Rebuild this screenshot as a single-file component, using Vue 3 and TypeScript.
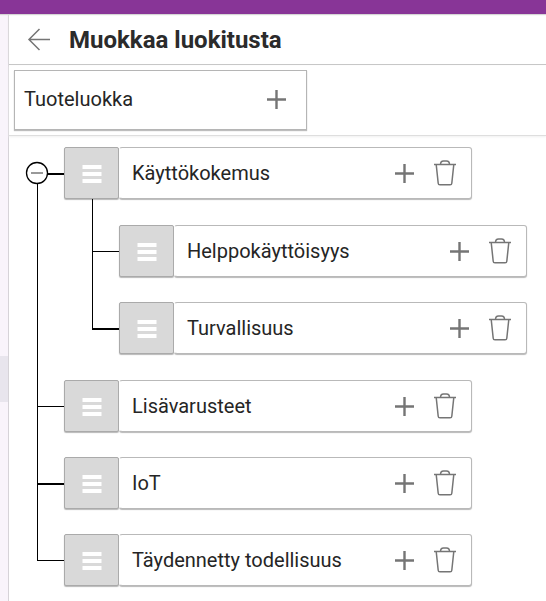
<script setup lang="ts">
import { ref } from 'vue'

interface Category {
  name: string
  children: Category[]
}

const rootName = ref('Tuoteluokka')
const expanded = ref(true)
const categories = ref<Category[]>([
  {
    name: 'Käyttökokemus',
    children: [
      { name: 'Helppokäyttöisyys', children: [] },
      { name: 'Turvallisuus', children: [] },
    ],
  },
  { name: 'Lisävarusteet', children: [] },
  { name: 'IoT', children: [] },
  { name: 'Täydennetty todellisuus', children: [] },
])

function add(list: Category[]) {
  list.push({ name: '', children: [] })
}

function remove(list: Category[], index: number) {
  list.splice(index, 1)
}
</script>

<template>
  <div class="app">
    <div class="topbar"></div>
    <div class="body">
      <aside class="rail"><div class="rail-item"></div></aside>
      <main class="panel">
        <header class="header">
          <button class="icon-button back" type="button" aria-label="Takaisin">
            <svg width="24" height="24" viewBox="0 0 24 24">
              <path d="M23 12.500H2M12.500 2L2 12.500l10.500 10.500" />
            </svg>
          </button>
          <h1>Muokkaa luokitusta</h1>
        </header>

        <section class="root-bar">
          <div class="root-card">
            <span class="name">{{ rootName }}</span>
            <button class="icon-button" type="button" aria-label="Lisää" @click="add(categories)">
              <svg class="plus" width="20" height="20" viewBox="0 0 20 20"><path d="M10.500 1v19M1 10.500h19" /></svg>
            </button>
          </div>
        </section>

        <ul class="tree">
          <li v-for="(item, i) in categories" :key="i" class="node">
            <button
              v-if="i === 0"
              class="toggle"
              type="button"
              aria-label="Tiivistä"
              :aria-expanded="expanded"
              @click="expanded = !expanded"
            >
              <svg width="24" height="24" viewBox="0 0 24 24">
                <circle cx="12" cy="12" r="10.500" />
                <path d="M6 12h12" />
              </svg>
            </button>
            <div class="row">
              <button class="handle" type="button" aria-label="Siirrä">
                <svg width="20" height="18" viewBox="0 0 20 18"><path d="M0.500 0h19v4h-19zM0.500 7h19v4h-19zM0.500 14h19v4h-19z" /></svg>
              </button>
              <div class="card">
                <span class="name">{{ item.name }}</span>
                <button class="icon-button" type="button" aria-label="Lisää" @click="add(item.children)">
                  <svg class="plus" width="20" height="20" viewBox="0 0 20 20"><path d="M10.500 1v19M1 10.500h19" /></svg>
                </button>
                <button class="icon-button" type="button" aria-label="Poista" @click="remove(categories, i)">
                  <svg class="trash" width="22" height="26" viewBox="0 0 22 26">
                    <path d="M0 4.500h22M2.200 4.500l2 18.700q.1 1.600 1.700 1.600h10.200q1.600 0 1.700-1.600l2-18.700M6.500 4.500C6.500 2 8 1 9.500 1h3C14 1 15.500 2 15.500 4.500" />
                  </svg>
                </button>
              </div>
            </div>

            <ul v-if="expanded && item.children.length" class="children">
              <li v-for="(child, j) in item.children" :key="j" class="node">
                <div class="row">
                  <button class="handle" type="button" aria-label="Siirrä">
                    <svg width="20" height="18" viewBox="0 0 20 18"><path d="M0.500 0h19v4h-19zM0.500 7h19v4h-19zM0.500 14h19v4h-19z" /></svg>
                  </button>
                  <div class="card">
                    <span class="name">{{ child.name }}</span>
                    <button class="icon-button" type="button" aria-label="Lisää" @click="add(child.children)">
                      <svg class="plus" width="20" height="20" viewBox="0 0 20 20"><path d="M10.500 1v19M1 10.500h19" /></svg>
                    </button>
                    <button class="icon-button" type="button" aria-label="Poista" @click="remove(item.children, j)">
                      <svg class="trash" width="22" height="26" viewBox="0 0 22 26">
                        <path d="M0 4.500h22M2.200 4.500l2 18.700q.1 1.600 1.700 1.600h10.200q1.600 0 1.700-1.600l2-18.700M6.500 4.500C6.500 2 8 1 9.500 1h3C14 1 15.500 2 15.500 4.500" />
                      </svg>
                    </button>
                  </div>
                </div>
              </li>
            </ul>
          </li>
        </ul>
      </main>
    </div>
  </div>
</template>

<style>
body {
  margin: 0;
  background: #fff;
}
</style>

<style scoped>
.app {
  min-height: 100vh;
  display: flex;
  flex-direction: column;
  overflow: hidden;
  box-sizing: border-box;
  font-family: Roboto, 'Liberation Sans', sans-serif;
  color: #252525;
}

.topbar {
  height: 14px;
  background: #883597;
  box-shadow: 0 1px 1px #d5d5d5;
  z-index: 1;
}

.body {
  flex: 1;
  display: grid;
  grid-template-columns: 9px minmax(0, 1fr);
}

.rail {
  box-sizing: border-box;
  padding-top: 342px;
  background: #f9f4fb;
  border-right: 1px solid #d6d3d8;
}

.rail-item {
  height: 46px;
  background: #e8e5ed;
}

.header {
  display: flex;
  align-items: center;
  gap: 18px;
  height: 50px;
  padding-left: 18px;
  border-bottom: 1px solid #c4c4c4;
  box-shadow: 0 -1px 2px #e4e4e4;
}

h1 {
  margin: 0;
  padding-top: 2px;
  font-size: 24px;
  line-height: 32px;
  font-weight: 700;
  color: #2b2b2b;
}

.icon-button {
  display: flex;
  padding: 0;
  border: 0;
  background: none;
  cursor: pointer;
}

.icon-button svg {
  fill: none;
  stroke: #757575;
}

.back svg {
  stroke-width: 1.500;
}

.icon-button .plus {
  stroke-width: 2.400;
}

.icon-button .trash {
  stroke-width: 1.500;
}

.root-bar {
  padding: 5px;
  border-bottom: 1px solid #dedede;
  box-shadow: 0 1px 2px #f0f0f0;
}

.root-card {
  box-sizing: border-box;
  display: flex;
  align-items: center;
  justify-content: space-between;
  width: 293px;
  max-width: 100%;
  height: 60px;
  padding: 0 20px 2px 9px;
  border: 1px solid #b5b5b5;
  box-shadow: 0 1px 1px #bdbdbd;
}

.name {
  flex: 1;
  font-size: 20px;
  line-height: 24px;
  white-space: nowrap;
}

.tree,
.children {
  margin: 0;
  padding: 0;
  list-style: none;
  display: flex;
  flex-direction: column;
}

.tree {
  padding: 11px 0 13px 55px;
  gap: 26px;
}

.children {
  padding: 26px 0 0 55px;
  gap: 25px;
}

.tree > .node + .node ~ .node {
  margin-top: -1px;
}

.node {
  position: relative;
}

/* Trunk that runs along the siblings */
.node::before {
  content: '';
  position: absolute;
  left: -27px;
  top: -26px;
  bottom: 0;
  width: 1px;
  background: #000;
}

.node:last-child::before {
  bottom: auto;
  height: 53px;
}

.tree > .node:first-child::before {
  top: 26px;
}

/* Branch from the trunk to a row */
.node::after {
  content: '';
  position: absolute;
  left: -27px;
  top: 26px;
  width: 27px;
  height: 1px;
  background: #000;
}

.tree > .node:nth-child(odd)::after,
.children > .node:nth-child(even)::after {
  height: 2px;
}

.toggle {
  position: absolute;
  left: -39px;
  top: 14px;
  z-index: 1;
  display: flex;
  padding: 0;
  border: 0;
  background: none;
  cursor: pointer;
}

.toggle circle {
  fill: #fff;
  stroke: #000;
  stroke-width: 1.300;
}

.toggle path {
  stroke: #999;
  stroke-width: 2;
}

.row {
  display: flex;
  width: 408px;
  height: 52px;
}

.handle {
  box-sizing: border-box;
  flex: none;
  display: flex;
  align-items: center;
  justify-content: center;
  width: 55px;
  padding: 2px 0 0;
  border: 1px solid #aaa;
  border-radius: 2px;
  background: #d9d9d9;
  box-shadow: 0 1px 1px #b8b8b8;
  cursor: move;
}

.handle svg {
  fill: #fff;
}

.card {
  box-sizing: border-box;
  flex: 1;
  display: flex;
  align-items: center;
  gap: 20px;
  padding: 0 15px 0 12px;
  border: 1px solid #b9b9b9;
  border-left-color: #fff;
  border-radius: 3px;
  background: #fff;
  box-shadow: 0 1px 1px #b8b8b8;
}
</style>
